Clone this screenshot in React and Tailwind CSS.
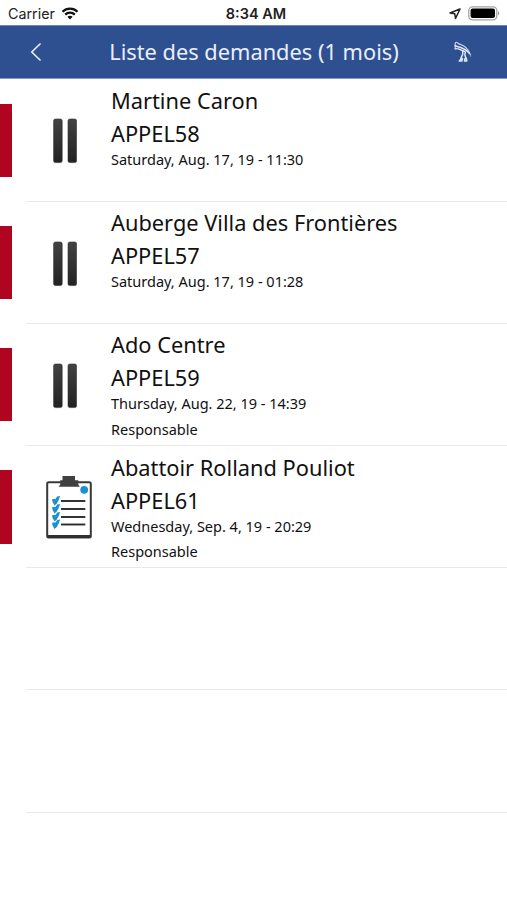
const requests = [
  { client: 'Martine Caron', code: 'APPEL58', date: 'Saturday, Aug. 17, 19 - 11:30', status: 'paused' },
  { client: 'Auberge Villa des Frontières', code: 'APPEL57', date: 'Saturday, Aug. 17, 19 - 01:28', status: 'paused' },
  { client: 'Ado Centre', code: 'APPEL59', date: 'Thursday, Aug. 22, 19 - 14:39', role: 'Responsable', status: 'paused' },
  { client: 'Abattoir Rolland Pouliot', code: 'APPEL61', date: 'Wednesday, Sep. 4, 19 - 20:29', role: 'Responsable', status: 'todo' },
];

const WifiIcon = () => (
  <svg width="18" height="13" viewBox="0 0 17 13" fill="none" stroke="#111" strokeWidth="2.3">
    <path d="M1 4.7C5.2.5 11.8.5 16 4.7" />
    <path d="M3.7 7.6c2.7-2.7 6.9-2.7 9.6 0" />
    <path d="M8.5 12.4 5.9 9.8c1.5-1.3 3.7-1.3 5.2 0z" fill="#111" stroke="none" />
  </svg>
);

const LocationIcon = () => (
  <svg width="12" height="12" viewBox="0 0 12 12" fill="none" stroke="#222" strokeWidth="1.5" strokeLinejoin="round">
    <path d="M11 1 1 5l4.8.8.7 4.7z" />
  </svg>
);

const BatteryIcon = () => (
  <svg width="32" height="15" viewBox="0 0 32 15">
    <rect x=".8" y=".8" width="28" height="13" rx="3.8" fill="#fff" stroke="#a3a3a3" strokeWidth="1.3" />
    <rect x="2.6" y="2.6" width="24.4" height="9.4" rx="2" fill="#000" />
    <path d="M30.2 5.2c1.5.7 1.5 3.5 0 4.2z" fill="#888" />
  </svg>
);

const BirdIcon = () => (
  <svg width="18" height="22" viewBox="0 0 18 22" fill="none" stroke="#dfe8fb" strokeLinecap="round" strokeLinejoin="round">
    <path d="M1.2 7.8V2.2C1.600.9 3.500.9 4 2.400c2.500 1.200 5 1.700 7.500 3.800 2.300 2 3.900 4.600 4.800 7.500" strokeWidth="1.2" opacity=".85" />
    <path d="M1.200 4.800 4 5.800c4 1 8 3 11.300 6.400" strokeWidth="1.6" />
    <path d="M1.200 7.800c2.800-.8 5.800 1.700 9.300 2.500" strokeWidth="1.3" />
    <path d="M8.700 10v3.500l-1.500 2.800c0 1.400-.6 2.600-2 3.700h2.600l.7-2.500" strokeWidth="1.5" />
    <path d="m11.300 11-.5 3 .9 2.500c-.8 1.200-1.200 2.300-1.200 3.500h2.300l-.6-3" strokeWidth="1.5" />
    <path d="M16.600 13.500v2" opacity=".45" />
  </svg>
);

const PauseIcon = () => (
  <svg width="24" height="46" viewBox="0 0 24 46">
    <defs>
      <linearGradient id="pause" x1="0" y1="0" x2="0" y2="1">
        <stop offset="0" stopColor="#424242" />
        <stop offset="1" stopColor="#222" />
      </linearGradient>
    </defs>
    <rect x=".6" y="1" width="8.6" height="43.6" rx="1.8" fill="url(#pause)" stroke="#333" strokeWidth=".6" />
    <rect x="15" y="1" width="8.6" height="43.6" rx="1.8" fill="url(#pause)" stroke="#333" strokeWidth=".6" />
  </svg>
);

const ClipboardIcon = () => (
  <svg width="46" height="63" viewBox="0 0 46 63" fill="none">
    <rect x="1.2" y="6.2" width="43.600" height="55.4" rx="1.5" fill="#fff" stroke="#383838" strokeWidth="2" />
    <path d="M1.5 60.6h43" stroke="#303030" strokeWidth="3" />
    <path d="M16.500 0h12.500v4.300h3.300v4.200l1.500 2.200H12.700l1.500-2.200V4.300h2.300z" fill="#404040" />
    <circle cx="38.2" cy="13.8" r="3.9" fill="#2090d2" />
    {[25, 33, 41, 48.5].map((y) => (
      <g key={y} transform={`translate(0 ${y})`}>
        <path d="M15 0h24.3" stroke="#2b2b2b" strokeWidth="1.9" />
        <path d="M6-1.700 9-2.300l.5.5 1.600-2.700 3-.4-1.300 3.600-2 3.900-2.300 2-1.900-3.700z" fill="#1f8fd0" />
      </g>
    ))}
  </svg>
);

const StatusBar = () => (
  <div className="grid h-[25px] grid-cols-3 items-center pt-[2px] pl-2 pr-[7px] font-[Inter,sans-serif] text-[#222]">
    <div className="flex items-center gap-[6px] text-[14.3px]">
      <span>Carrier</span>
      <WifiIcon />
    </div>
    <div className="pl-1 text-center text-[14.5px] font-semibold">8:34 AM</div>
    <div className="flex items-center justify-end gap-[7px]">
      <LocationIcon />
      <BatteryIcon />
    </div>
  </div>
);

const Header = () => (
  <header className="flex h-[54px] items-center justify-between border-y border-t-[#6d88bb] border-b-[#7f9acb] bg-[#2e4f90] pl-[30px] pr-[35px] text-[#e9effc]">
    <button className="w-7" aria-label="Retour">
      <svg width="12" height="20" viewBox="0 0 12 20" fill="none" stroke="currentColor" strokeWidth="1.6">
        <path d="M10.5 1.5 1.8 10l8.7 8.5" />
      </svg>
    </button>
    <h1 className="whitespace-nowrap pr-[4px] text-[21.8px]">Liste des demandes (1 mois)</h1>
    <button className="w-[18px]" aria-label="Menu">
      <BirdIcon />
    </button>
  </header>
);

const RequestRow = ({ client, code, date, role, status }) => (
  <li className="flex h-[122.2px]">
    <div className="mt-[24.3px] h-[73.3px] w-3 shrink-0 bg-[#b00521]" />
    <div className="ml-[14px] flex min-w-0 flex-1 border-b border-[#e9e9e9]">
      <div className="flex w-[85px] shrink-0 items-center pt-[3px]">
        {status === 'paused' ? (
          <div className="pl-[27px]">
            <PauseIcon />
          </div>
        ) : (
          <div className="pb-[2px] pl-5">
            <ClipboardIcon />
          </div>
        )}
      </div>
      <div className="whitespace-nowrap pt-[4.7px] text-[#111]">
        <p className="text-[21.8px] leading-[33px]">{client}</p>
        <p className="text-[21.8px] leading-[33px]">{code}</p>
        <p className="text-[14.5px] leading-[18px]">{date}</p>
        {role && <p className="mt-[7.5px] text-[14.5px] leading-[18px]">{role}</p>}
      </div>
    </div>
  </li>
);

const App = () => (
  <div className="h-[900px] w-full overflow-hidden bg-white font-['Noto_Sans','Open_Sans',sans-serif]">
    <StatusBar />
    <Header />
    <ul className="pt-[0.4px]">
      {requests.map((request) => (
        <RequestRow key={request.code} {...request} />
      ))}
      <li className="ml-[26px] h-[122.2px] border-b border-[#e9e9e9]" />
      <li className="ml-[26px] h-[122.2px] border-b border-[#e9e9e9]" />
    </ul>
  </div>
);

export default App;
